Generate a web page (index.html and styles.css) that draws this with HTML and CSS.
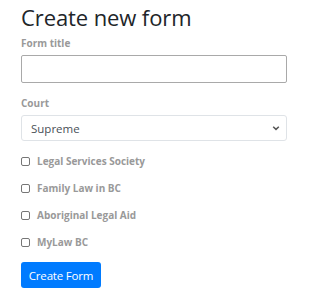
FILE: index.html
```html
<!DOCTYPE html>
<html>
<head>
<meta charset="utf-8">
<link rel="stylesheet" href="styles.css">
</head>
<body>
<div class="page">
  <h1 class="title">Create new form</h1>
  <div class="field">
    <label class="label" for="t">Form title</label>
    <input id="t" class="input" type="text">
  </div>
  <div class="field">
    <label class="label" for="c">Court</label>
    <div class="select">
      <span>Supreme</span>
      <svg class="chev" width="8" height="6" viewBox="0 0 8 6"><path d="M1.2 1.8 L4 4.4 L6.8 1.8" fill="none" stroke="#555" stroke-width="1.5"/></svg>
    </div>
  </div>
  <div class="checks">
    <label class="check"><span class="box"></span>Legal Services Society</label>
    <label class="check"><span class="box"></span>Family Law in BC</label>
    <label class="check"><span class="box"></span>Aboriginal Legal Aid</label>
    <label class="check"><span class="box"></span>MyLaw BC</label>
  </div>
  <button class="btn">Create Form</button>
</div>
</body>
</html>
```
FILE: styles.css
```css
html, body { margin: 0; padding: 0; background: #fff; }
body { font-family: "Open Sans", "Noto Sans", sans-serif; color: #212529; }
.page { width: 266px; padding: 0 0 0 21px; display: flex; flex-direction: column; }
.title { font-size: 22px; font-weight: 500; margin: 2px 0 0 0; line-height: 30px; color: #212529; letter-spacing: -0.1px; }
.field { display: flex; flex-direction: column; }
.label { font-size: 10px; font-weight: 700; color: #999; line-height: 14px; margin-top: 4px; }
.input { box-sizing: border-box; width: 100%; height: 28px; margin: 5px 0 0 0; border: 1px solid #a9a9a9; border-radius: 2px; padding: 0 8px; font: inherit; }
.field + .field .label { margin-top: 13px; }
.select { box-sizing: border-box; height: 26px; margin-top: 5px; border: 1px solid #dfe3e7; border-radius: 3px; display: flex; align-items: center; justify-content: space-between; padding: 0 6px 0 9px; font-size: 11.5px; color: #495057; }
.chev { display: block; }
.checks { display: flex; flex-direction: column; margin-top: 13px; gap: 13px; }
.check { display: flex; align-items: center; font-size: 10px; font-weight: 700; color: #999; line-height: 14px; }
.box { box-sizing: border-box; width: 9px; height: 9px; border: 1px solid #767676; border-radius: 2px; margin-right: 7px; }
.btn { align-self: flex-start; margin-top: 13px; width: 80px; height: 26px; background: #007bff; color: #fff; border: none; border-radius: 3px; font-family: "Open Sans", sans-serif; font-size: 11.5px; letter-spacing: -0.2px; padding: 0; }
```
